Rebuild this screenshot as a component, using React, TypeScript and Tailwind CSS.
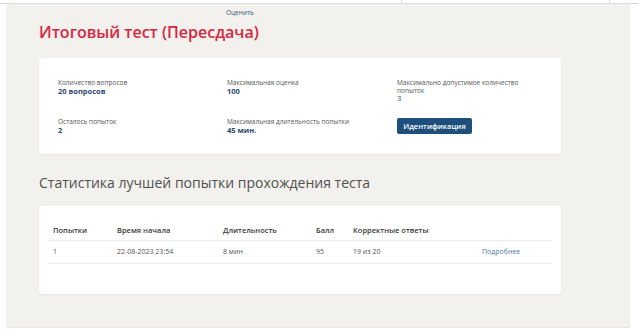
import React from "react";

const font = { fontFamily: '"Open Sans", "Noto Sans", sans-serif' };

function Info({ label, value }: { label: React.ReactNode; value: string }) {
  return (
    <div>
      <div className="text-[6.5px] leading-[8px] text-[#555]">{label}</div>
      <div className="text-[7.5px] leading-[9px] font-bold text-[#2b4a6f]">{value}</div>
    </div>
  );
}

export default function App() {
  const cols = ["w-[64px]", "w-[106px]", "w-[93px]", "w-[37px]", "w-[129px]", "flex-1"];
  const headers = ["Попытки", "Время начала", "Длительность", "Балл", "Корректные ответы", ""];
  const row = ["1", "22-08-2023 23:54", "8 мин", "95", "19 из 20"];
  return (
    <div className="w-[638px] h-[333px] bg-white overflow-hidden" style={font}>
      <div className="flex h-[4px] border-b border-[#d9d9d9]">
        <div className="w-[402px] border-r border-[#d9d9d9]" />
        <div className="w-[208px] border-r border-[#d9d9d9]" />
        <div className="flex-1" />
      </div>
      <div className="ml-[6px] w-[624px] h-[324px] bg-[#f2f1ee] border-b border-[#e6e6e6] pl-[33px] pt-[5px]">
        <div className="pl-[187px] text-[6.5px] leading-[8px] text-[#3d5570]">Оценить</div>
        <h1 className="mt-[5px] text-[16px] leading-[20px] font-semibold text-[#d8263f]">
          Итоговый тест (Пересдача)
        </h1>
        <div className="mt-[16px] w-[522px] h-[96px] bg-white rounded-[3px] shadow-[0_1px_2px_rgba(0,0,0,0.06)] pl-[19px] pt-[21px]">
          <div className="grid grid-cols-[169px_170px_130px] gap-y-[15px]">
            <Info label="Количество вопросов" value="20 вопросов" />
            <Info label="Максимальная оценка" value="100" />
            <div className="w-[125px]">
              <div className="text-[6.5px] leading-[7.5px] text-[#555]">
                Максимально допустимое количество попыток
              </div>
              <div className="text-[7.5px] leading-[9px] text-[#2b4a6f]">3</div>
            </div>
            <Info label="Осталось попыток" value="2" />
            <Info label="Максимальная длительность попытки" value="45 мин." />
            <div className="flex">
              <button className="block w-[75px] h-[16px] rounded-[2px] bg-[#1d4f7d] text-white text-[7.5px] leading-[16px] font-semibold">
                Идентификация
              </button>
            </div>
          </div>
        </div>
        <h2 className="mt-[19px] text-[14px] leading-[20px] text-[#505050]">
          Статистика лучшей попытки прохождения теста
        </h2>
        <div className="mt-[13px] w-[522px] h-[88px] bg-white rounded-[3px] shadow-[0_1px_2px_rgba(0,0,0,0.06)] px-[9px] pt-[15px]">
          <div className="flex h-[20px] items-center border-b-[1.5px] border-[#ececec] text-[7.5px] font-semibold text-[#3a3a3a]">
            {headers.map((h, i) => (
              <div key={i} className={`${cols[i]} pl-[5px]`}>{h}</div>
            ))}
          </div>
          <div className="flex h-[23px] items-center border-b-[1.5px] border-[#ececec] text-[7px] text-[#555]">
            {row.map((c, i) => (
              <div key={i} className={`${cols[i]} pl-[5px]`}>{c}</div>
            ))}
            <div className="flex-1 pl-[5px] text-[#4d7aa6]">Подробнее</div>
          </div>
        </div>
      </div>
    </div>
  );
}
